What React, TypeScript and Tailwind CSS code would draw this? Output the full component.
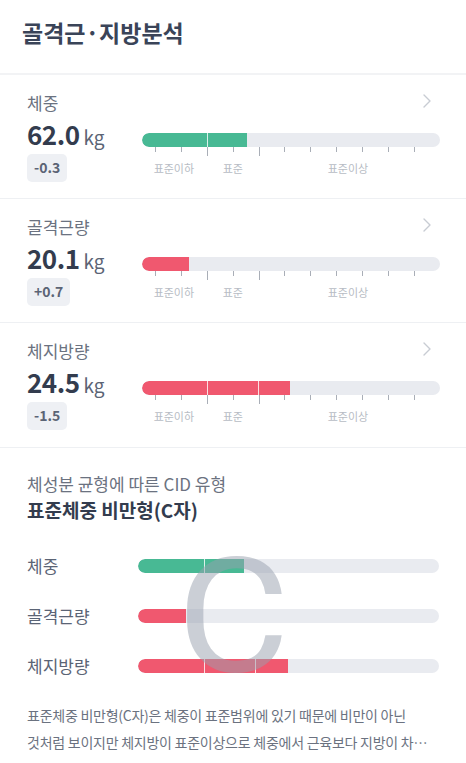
const font = "font-['Noto_Sans_CJK_KR','Noto_Sans',sans-serif]";

const GREEN = '#48b994';
const RED = '#f0586f';

interface Metric {
  label: string;
  value: string;
  diff: string;
  fill: number; // percent
  color: string;
  splits: number[];
}

const metrics: Metric[] = [
  { label: '체중', value: '62.0', diff: '-0.3', fill: 35.2, color: GREEN, splits: [21.8] },
  { label: '골격근량', value: '20.1', diff: '+0.7', fill: 15.8, color: RED, splits: [] },
  { label: '체지방량', value: '24.5', diff: '-1.5', fill: 49.7, color: RED, splits: [21.8, 38.9] },
];

// tick positions as percent of the bar width
const ticks = Array.from({ length: 11 }, (_, i) => ({
  left: 4.36 + i * 8.69,
  long: i === 2 || i === 4,
}));

function Bar({ fill, color, splits }: { fill: number; color: string; splits: number[] }) {
  return (
    <div className="relative h-[14px] w-full overflow-hidden rounded-full bg-[#e9ebf0]">
      <div className="absolute inset-y-0 left-0 rounded-l-full" style={{ width: `${fill}%`, backgroundColor: color }} />
      {splits.map((s) => (
        <div key={s} className="absolute inset-y-0 w-px bg-white/80" style={{ left: `${s}%` }} />
      ))}
    </div>
  );
}

function Chevron() {
  return (
    <svg width="10" height="14" viewBox="0 0 10 14" fill="none">
      <path d="M2 1l6 6-6 6" stroke="#c8ccd3" strokeWidth="1.4" strokeLinecap="round" strokeLinejoin="round" />
    </svg>
  );
}

function MetricRow({ m, last }: { m: Metric; last?: boolean }) {
  return (
    <div className={`pl-[27px] pr-[26px] pt-[15px] h-[124px] ${last ? '' : 'border-b border-[#eef0f3]'}`}>
      <div className="flex items-center justify-between">
        <span className="text-[17px] leading-[26px] text-[#6b7280]">{m.label}</span>
        <span className="mr-[8px] mt-[-4px]">
          <Chevron />
        </span>
      </div>
      <div className="flex mt-[2px]">
        <div className="w-[115px]">
          <div className="flex items-baseline">
            <span className="text-[26px] font-bold leading-[32px] text-[#333c4e] tracking-[-0.5px]">{m.value}</span>
            <span className="ml-[4px] text-[19px] text-[#5b6475]">kg</span>
          </div>
          <div className="mt-[2px] inline-flex h-[28px] items-center rounded-[5px] bg-[#eef0f4] px-[7px] text-[14px] font-bold text-[#5b6475]">
            {m.diff}
          </div>
        </div>
        <div className="flex-1 pt-[15px]">
          <Bar fill={m.fill} color={m.color} splits={m.splits} />
          <div className="relative h-[30px]">
            {ticks.map((t) => (
              <div
                key={t.left}
                className={`absolute top-0 w-px bg-[#a9aeb7] ${t.long ? 'h-[9px]' : 'h-[5px]'}`}
                style={{ left: `${t.left}%` }}
              />
            ))}
            {[
              { t: '표준이하', x: 10.7 },
              { t: '표준', x: 30.5 },
              { t: '표준이상', x: 69.1 },
            ].map((l) => (
              <span
                key={l.t}
                className="absolute top-[13px] -translate-x-1/2 text-[11px] leading-[16px] text-[#b7bcc4]"
                style={{ left: `${l.x}%` }}
              >
                {l.t}
              </span>
            ))}
          </div>
        </div>
      </div>
    </div>
  );
}

export default function App() {
  return (
    <div className={`${font} w-[466px] h-[763px] overflow-hidden bg-white`}>
      <div className="h-[75px] border-b-2 border-[#f2f3f5] pl-[22px] pt-[15px]">
        <h1 className="text-[23px] font-bold leading-[34px] text-[#3a4458]">골격근·지방분석</h1>
      </div>

      {metrics.map((m, i) => (
        <MetricRow key={m.label} m={m} last={i === metrics.length - 1} />
      ))}

      <div className="border-t border-[#eef0f3] px-[27px] pt-[23px]">
        <p className="text-[17px] leading-[25px] text-[#6b7280]">체성분 균형에 따른 CID 유형</p>
        <p className="text-[19px] font-bold leading-[28px] text-[#333c4e]">표준체중 비만형(C자)</p>

        <div className="relative mt-[30px] flex flex-col gap-[26px]">
          {metrics.map((m) => (
            <div key={m.label} className="flex h-[24px] items-center">
              <span className="w-[111px] text-[17px] text-[#5b6475]">{m.label}</span>
              <div className="flex-1">
                <Bar fill={m.fill} color={m.color} splits={m.splits} />
              </div>
            </div>
          ))}
          <span className="pointer-events-none absolute left-[150px] top-[-17px] origin-left scale-x-[1.08] font-['Roboto',sans-serif] text-[160px] font-normal leading-none text-[#97a0ad]/50">
            C
          </span>
        </div>

        <p className="mt-[24px] line-clamp-2 text-[14px] leading-[27px] tracking-[-0.25px] text-[#6b7280]">
          표준체중 비만형(C자)은 체중이 표준범위에 있기 때문에 비만이 아닌
          <br />
          것처럼 보이지만 체지방이 표준이상으로 체중에서 근육보다 지방이 차지하는 비율이 높은 유형입니다.
        </p>
      </div>
    </div>
  );
}
